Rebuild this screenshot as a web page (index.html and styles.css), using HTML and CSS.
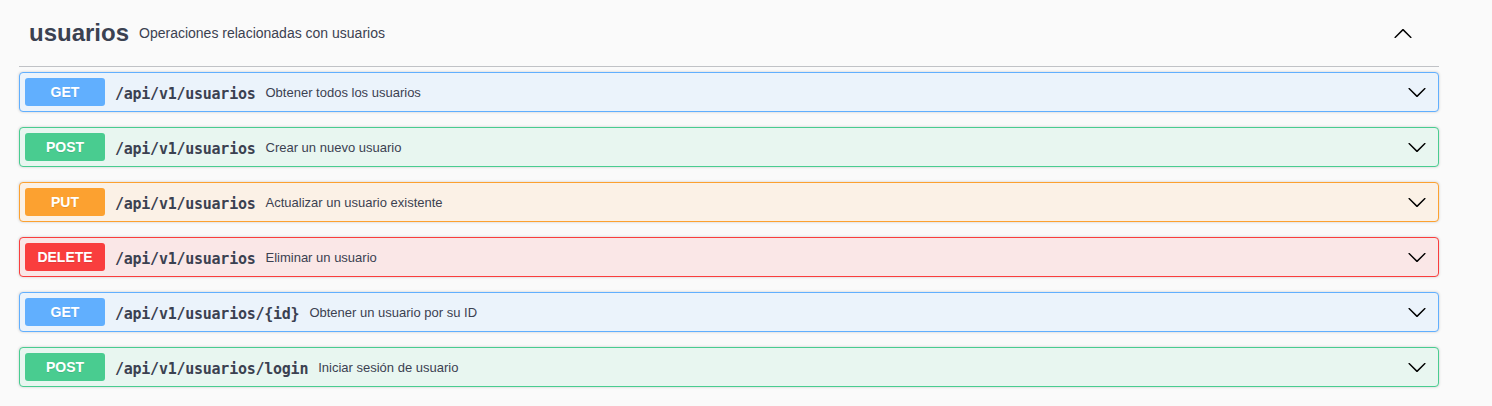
FILE: index.html
```html
<!DOCTYPE html>
<html lang="es">
<head>
<meta charset="utf-8">
<title>usuarios</title>
<link rel="stylesheet" href="styles.css">
</head>
<body>
<div class="wrapper">
  <div class="tag-section">
    <h3 class="opblock-tag">
      <span class="tag-name">usuarios</span>
      <small class="tag-desc">Operaciones relacionadas con usuarios</small>
      <button class="expand" aria-label="collapse">
        <svg width="20" height="20" viewBox="0 0 20 20"><path d="M17.418 14.908c.272.268.709.268.979 0s.271-.701 0-.969l-7.908-7.83c-.27-.268-.707-.268-.979 0l-7.908 7.83c-.27.268-.27.701 0 .969.271.268.709.268.979 0L10 7.741l7.418 7.167z"/></svg>
      </button>
    </h3>

    <div class="opblock get">
      <span class="method">GET</span>
      <span class="path">/api/v1/usuarios</span>
      <span class="desc">Obtener todos los usuarios</span>
      <svg class="arrow" width="20" height="20" viewBox="0 0 20 20"><path d="M17.418 6.109c.272-.268.709-.268.979 0s.271.701 0 .969l-7.908 7.83c-.27.268-.707.268-.979 0l-7.908-7.830c-.27-.268-.27-.701 0-.969.271-.268.709-.268.979 0L10 13.25l7.418-7.141z"/></svg>
    </div>
    <div class="opblock post">
      <span class="method">POST</span>
      <span class="path">/api/v1/usuarios</span>
      <span class="desc">Crear un nuevo usuario</span>
      <svg class="arrow" width="20" height="20" viewBox="0 0 20 20"><path d="M17.418 6.109c.272-.268.709-.268.979 0s.271.701 0 .969l-7.908 7.83c-.27.268-.707.268-.979 0l-7.908-7.83c-.27-.268-.27-.701 0-.969.271-.268.709-.268.979 0L10 13.25l7.418-7.141z"/></svg>
    </div>
    <div class="opblock put">
      <span class="method">PUT</span>
      <span class="path">/api/v1/usuarios</span>
      <span class="desc">Actualizar un usuario existente</span>
      <svg class="arrow" width="20" height="20" viewBox="0 0 20 20"><path d="M17.418 6.109c.272-.268.709-.268.979 0s.271.701 0 .969l-7.908 7.83c-.27.268-.707.268-.979 0l-7.908-7.83c-.27-.268-.27-.701 0-.969.271-.268.709-.268.979 0L10 13.25l7.418-7.141z"/></svg>
    </div>
    <div class="opblock delete">
      <span class="method">DELETE</span>
      <span class="path">/api/v1/usuarios</span>
      <span class="desc">Eliminar un usuario</span>
      <svg class="arrow" width="20" height="20" viewBox="0 0 20 20"><path d="M17.418 6.109c.272-.268.709-.268.979 0s.271.701 0 .969l-7.908 7.83c-.27.268-.707.268-.979 0l-7.908-7.83c-.27-.268-.27-.701 0-.969.271-.268.709-.268.979 0L10 13.25l7.418-7.141z"/></svg>
    </div>
    <div class="opblock get">
      <span class="method">GET</span>
      <span class="path">/api/v1/usuarios/{id}</span>
      <span class="desc">Obtener un usuario por su ID</span>
      <svg class="arrow" width="20" height="20" viewBox="0 0 20 20"><path d="M17.418 6.109c.272-.268.709-.268.979 0s.271.701 0 .969l-7.908 7.83c-.27.268-.707.268-.979 0l-7.908-7.83c-.27-.268-.27-.701 0-.969.271-.268.709-.268.979 0L10 13.25l7.418-7.141z"/></svg>
    </div>
    <div class="opblock post">
      <span class="method">POST</span>
      <span class="path">/api/v1/usuarios/login</span>
      <span class="desc">Iniciar sesión de usuario</span>
      <svg class="arrow" width="20" height="20" viewBox="0 0 20 20"><path d="M17.418 6.109c.272-.268.709-.268.979 0s.271.701 0 .969l-7.908 7.83c-.27.268-.707.268-.979 0l-7.908-7.83c-.27-.268-.27-.701 0-.969.271-.268.709-.268.979 0L10 13.25l7.418-7.141z"/></svg>
    </div>
  </div>
</div>
</body>
</html>
```

FILE: styles.css
```css
html, body {
  margin: 0;
  padding: 0;
  background: #fafafa;
  font-family: "Liberation Sans", Arial, sans-serif;
  color: #3b4151;
}

.wrapper {
  padding-left: 19px;
  width: 1420px;
}

.opblock-tag {
  display: flex;
  align-items: center;
  height: 66px;
  margin: 0 0 5px;
  padding: 0 26px 0 10px;
  border-bottom: 1px solid rgba(59, 65, 81, 0.3);
  font-size: 24px;
  font-weight: 700;
  color: #3b4151;
}

.tag-name {
  line-height: 28px;
}

.tag-desc {
  flex: 1;
  padding: 0 10px;
  font-size: 14px;
  font-weight: 400;
  color: #3b4151;
}

.expand {
  display: flex;
  padding: 0;
  border: 0;
  background: none;
  fill: #000;
}

.opblock {
  display: flex;
  align-items: center;
  height: 28px;
  padding: 5px;
  margin-bottom: 15px;
  border: 1px solid;
  border-radius: 4px;
  box-shadow: 0 0 3px rgba(0, 0, 0, 0.19);
}

.method {
  min-width: 80px;
  height: 28px;
  line-height: 28px;
  text-align: center;
  border-radius: 3px;
  color: #fff;
  font-size: 14px;
  font-weight: 700;
  text-shadow: 0 1px 0 rgba(0, 0, 0, 0.1);
}

.path {
  margin-top: 3px;
  padding: 0 10px;
  font-family: "DejaVu Sans Mono", "Liberation Mono", monospace;
  font-size: 15px;
  font-weight: 700;
  letter-spacing: -0.25px;
  color: #3b4151;
}

.desc {
  flex: 1;
  font-size: 13px;
  color: #3b4151;
}

.arrow {
  margin-right: 6px;
  fill: #000;
}

.get { border-color: #61affe; background: #ebf3fb; }
.get .method { background: #61affe; }

.post { border-color: #49cc90; background: #e8f6f0; }
.post .method { background: #49cc90; }

.put { border-color: #fca130; background: #fbf1e6; }
.put .method { background: #fca130; }

.delete { border-color: #f93e3e; background: #fae7e7; }
.delete .method { background: #f93e3e; }
```
